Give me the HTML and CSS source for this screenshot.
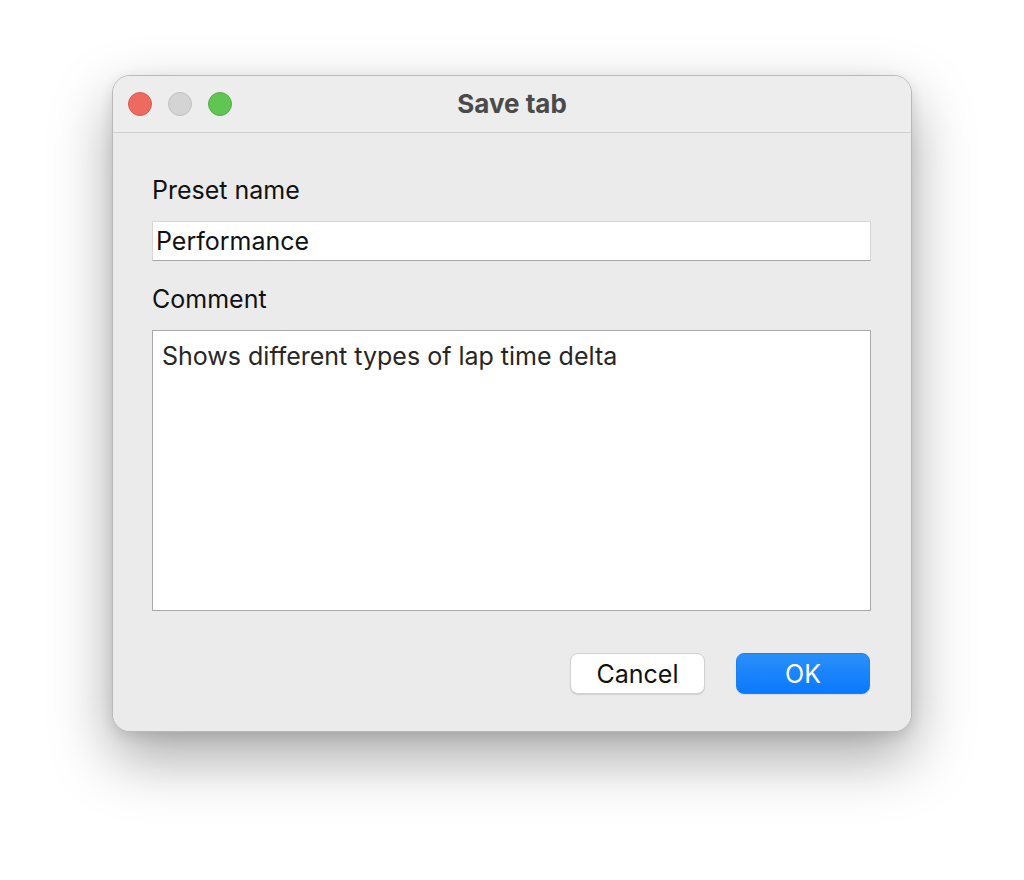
FILE: index.html
```html
<!DOCTYPE html>
<html>
<head>
<meta charset="utf-8">
<link rel="stylesheet" href="styles.css">
</head>
<body>
<div class="window">
  <div class="titlebar">
    <div class="lights">
      <span class="light red"></span>
      <span class="light gray"></span>
      <span class="light green"></span>
    </div>
    <div class="title">Save tab</div>
  </div>
  <div class="content">
    <div class="label first">Preset name</div>
    <div class="field">Performance</div>
    <div class="label second">Comment</div>
    <div class="area">Shows different types of lap time delta</div>
    <div class="buttons">
      <button class="btn cancel">Cancel</button>
      <button class="btn ok">OK</button>
    </div>
  </div>
</div>
</body>
</html>
```

FILE: styles.css
```css
html, body {
  margin: 0;
  padding: 0;
  background: #ffffff;
}
body {
  width: 1024px;
  height: 880px;
  font-family: Inter, "Liberation Sans", sans-serif;
  padding-top: 75px;
  box-sizing: border-box;
}
.window {
  width: 800px;
  height: 657px;
  margin: 0 auto;
  background: #ececec;
  border-radius: 18px;
  box-sizing: border-box;
  border: 1px solid #b9b9b9;
  box-shadow: 0 26px 60px rgba(0,0,0,0.34), 0 4px 14px rgba(0,0,0,0.1);
  display: flex;
  flex-direction: column;
  overflow: hidden;
}
.titlebar {
  height: 56px;
  flex: none;
  border-bottom: 1px solid #cfcfcf;
  background: #ededed;
  display: flex;
  align-items: center;
  position: relative;
}
.lights {
  display: flex;
  gap: 16px;
  padding-left: 15px;
}
.light {
  width: 24px;
  height: 24px;
  border-radius: 50%;
  box-sizing: border-box;
}
.red { background: #ee6a5f; border: 1px solid #d55a50; }
.gray { background: #d4d4d4; border: 1px solid #bfbfbf; }
.green { background: #61c554; border: 1px solid #52ad45; }
.title {
  position: absolute;
  left: 0;
  right: 0;
  top: 0;
  bottom: 0;
  display: flex;
  align-items: center;
  justify-content: center;
  font-weight: 700;
  font-size: 26px;
  color: #4a4a4a;
  pointer-events: none;
  padding-bottom: 2px;
}
.content {
  flex: 1;
  padding: 0 40px 0 39px;
  display: flex;
  flex-direction: column;
  background: #ebebeb;
}
.label {
  font-size: 25px;
  color: #111;
  line-height: 28px;
}
.label.first { margin-top: 43px; }
.label.second { margin-top: 24px; }
.field {
  margin-top: 17px;
  height: 40px;
  box-sizing: border-box;
  background: #fff;
  border: 1px solid #d6d6d6;
  border-bottom-color: #a9a9a9;
  font-size: 25px;
  color: #111;
  line-height: 38px;
  padding-left: 3px;
}
.area {
  margin-top: 17px;
  height: 281px;
  box-sizing: border-box;
  background: #fff;
  border: 1px solid #a9a9a9;
  font-size: 25px;
  color: #262626;
  padding: 10px 9px;
  line-height: 30px;
}
.buttons {
  margin-top: 42px;
  display: flex;
  justify-content: flex-end;
  gap: 31px;
  padding-right: 1px;
}
.btn {
  height: 41px;
  border-radius: 8px;
  font-family: Inter, "Liberation Sans", sans-serif;
  font-size: 25px;
  padding: 0;
}
.cancel {
  width: 135px;
  background: #fff;
  color: #111;
  border: 1px solid #d2d2d2;
  box-shadow: 0 1px 1px rgba(0,0,0,0.12);
}
.ok {
  width: 134px;
  background: linear-gradient(#2b8ff9, #0a79ff);
  color: #fff;
  border: 1px solid #1a80f0;
  box-shadow: 0 1px 1px rgba(0,0,0,0.08);
}
```
